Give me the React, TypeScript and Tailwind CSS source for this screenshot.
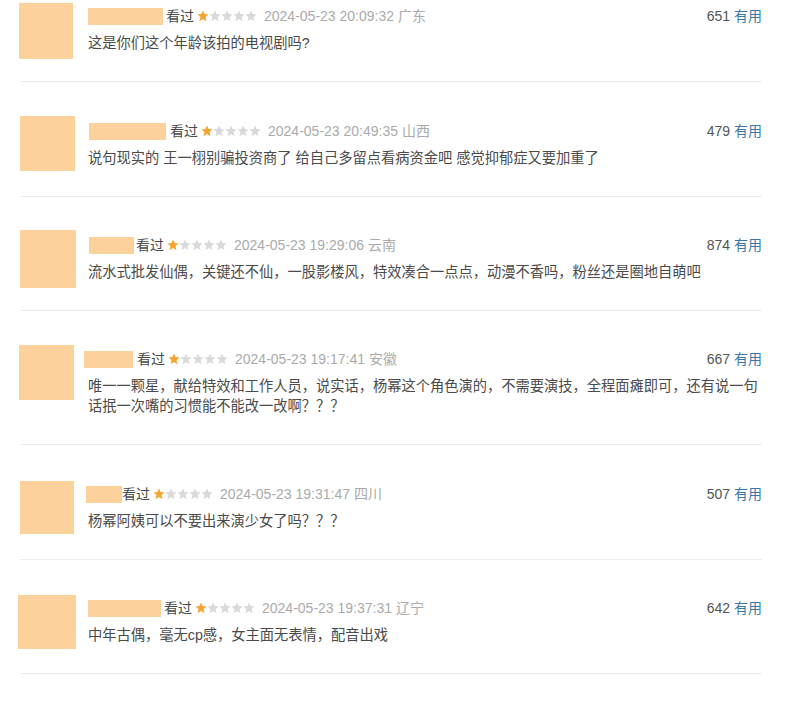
const reviews = [
  {
    av: { dx: -1, dy: 0, w: 54, h: 56 },
    name: { dx: 0, w: 75, gap: 3 },
    pt: 3,
    count: 651,
    time: "2024-05-23 20:09:32 广东",
    text: "这是你们这个年龄该拍的电视剧吗?",
  },
  {
    av: { dx: 0, dy: -2, w: 55, h: 55 },
    name: { dx: 1, w: 77, gap: 4 },
    pt: 36,
    count: 479,
    time: "2024-05-23 20:49:35 山西",
    text: "说句现实的 王一栩别骗投资商了 给自己多留点看病资金吧 感觉抑郁症又要加重了",
  },
  {
    av: { dx: 0, dy: -2, w: 56, h: 58 },
    name: { dx: 1, w: 45, gap: 2 },
    pt: 35,
    count: 874,
    time: "2024-05-23 19:29:06 云南",
    text: "流水式批发仙偶，关键还不仙，一股影楼风，特效凑合一点点，动漫不香吗，粉丝还是圈地自萌吧",
  },
  {
    av: { dx: -1, dy: -1, w: 55, h: 55 },
    name: { dx: -4, w: 49, gap: 4 },
    pt: 35,
    count: 667,
    time: "2024-05-23 19:17:41 安徽",
    text: "唯一一颗星，献给特效和工作人员，说实话，杨幂这个角色演的，不需要演技，全程面瘫即可，还有说一句话抿一次嘴的习惯能不能改一改啊？？？",
  },
  {
    av: { dx: 0, dy: 0, w: 54, h: 53 },
    name: { dx: -2, w: 36, gap: 0 },
    pt: 36,
    count: 507,
    time: "2024-05-23 19:31:47 四川",
    text: "杨幂阿姨可以不要出来演少女了吗？？？",
  },
  {
    av: { dx: -2, dy: 0, w: 58, h: 54 },
    name: { dx: 0, w: 73, gap: 3 },
    pt: 35,
    count: 642,
    time: "2024-05-23 19:37:31 辽宁",
    text: "中年古偶，毫无cp感，女主面无表情，配音出戏",
  },
];

function Stars({ n }: { n: number }) {
  return (
    <span className="ml-[3px] mr-[7px] inline-flex items-center">
      {[0, 1, 2, 3, 4].map((i) => (
        <svg key={i} width="12" height="12" viewBox="0 0 12 12">
          <polygon
            points="6,0.4 7.6,4.1 11.6,4.4 8.5,7.1 9.5,11.2 6,9 2.5,11.2 3.5,7.1 0.4,4.4 4.4,4.1"
            fill={i < n ? "#f5a431" : "#d9d9d9"}
          />
        </svg>
      ))}
    </span>
  );
}

export default function App() {
  return (
    <div className="min-h-[706px] w-[785px] bg-white font-['Liberation_Sans','Noto_Sans_CJK_SC',sans-serif]">
      <div className="ml-[20px] w-[742px]">
        {reviews.map((r, idx) => (
          <div key={idx} className="flex border-b border-[#ececec]" style={{ paddingTop: r.pt }}>
            <div className="w-[55px] shrink-0">
              <div
                className="bg-[#fdd19c]"
                style={{ marginLeft: r.av.dx, marginTop: r.av.dy, width: r.av.w, height: r.av.h }}
              />
            </div>
            <div className="ml-[13px] flex-1 pb-[28px]">
              <div className="flex h-[26px] items-center justify-between text-[14px]">
                <div className="flex items-center">
                  <span
                    className="h-[17px] bg-[#fdd19c]"
                    style={{ marginLeft: r.name.dx, width: r.name.w, marginRight: r.name.gap }}
                  />
                  <span className="text-[#4a4a4a]">看过</span>
                  <Stars n={1} />
                  <span className="text-[#aaaaaa]">{r.time}</span>
                </div>
                <div>
                  <span className="text-[#555555]">{r.count}</span>{" "}
                  <span className="text-[#3a77a8]">有用</span>
                </div>
              </div>
              <p className="mt-[4px] text-[14.25px] leading-[20px] text-[#4a4a4a]">{r.text}</p>
            </div>
          </div>
        ))}
      </div>
    </div>
  );
}
